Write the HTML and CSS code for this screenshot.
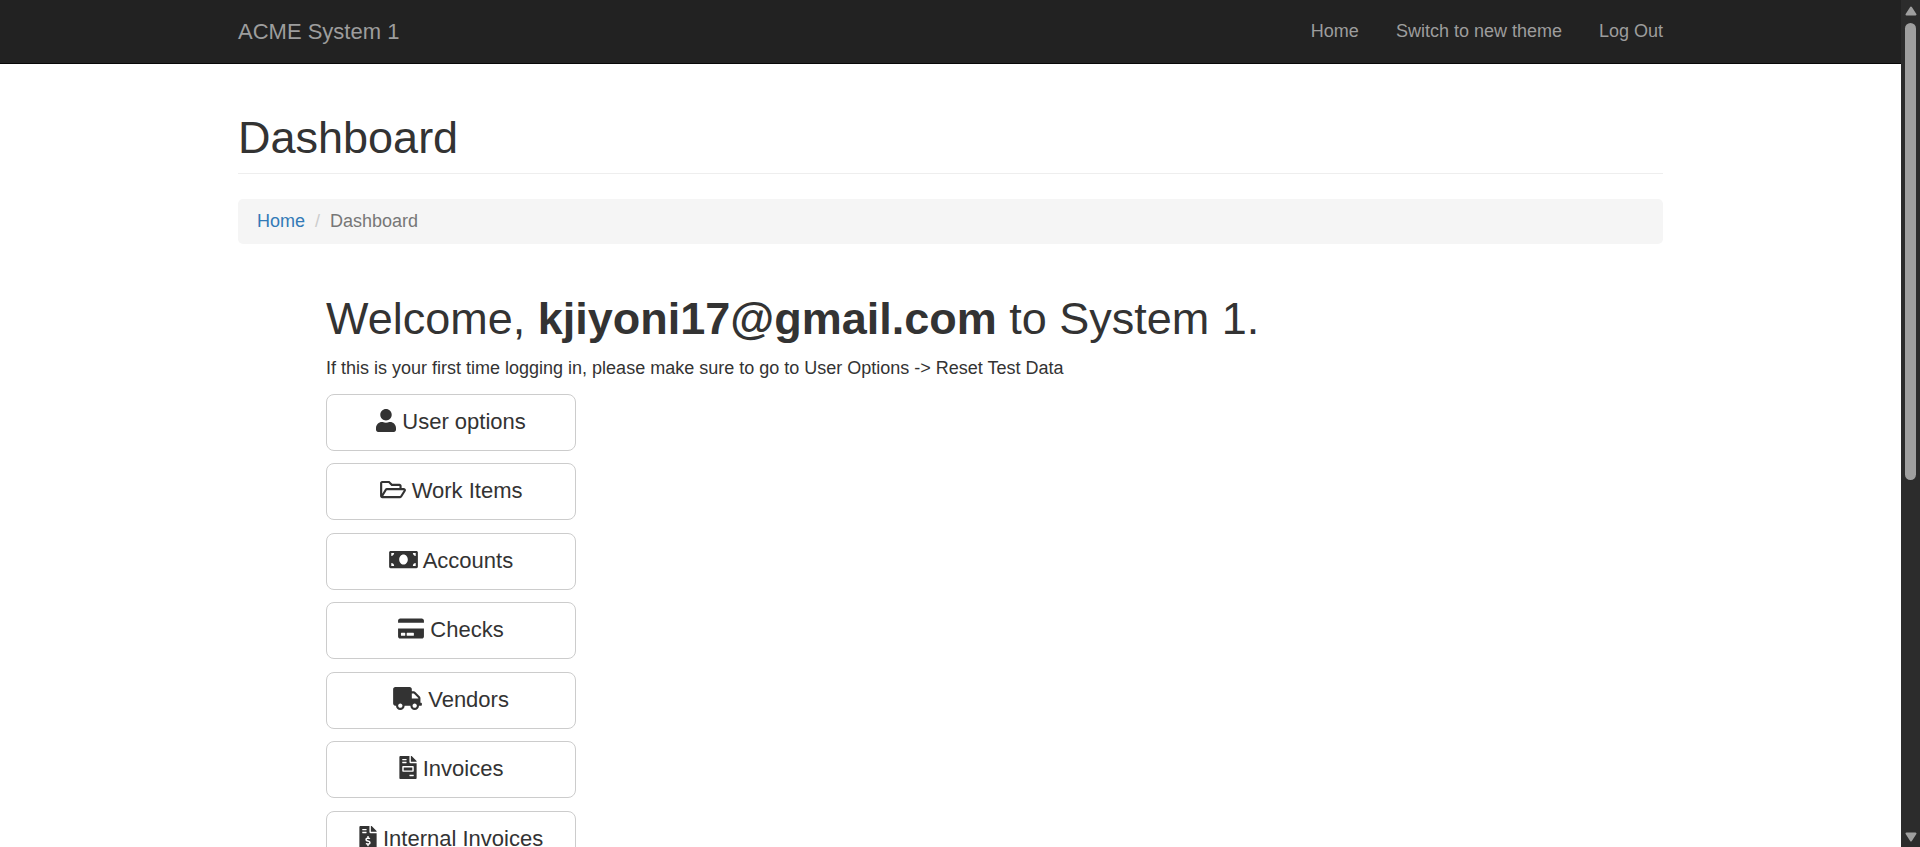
FILE: index.html
```html
<!DOCTYPE html>
<html lang="en">
<head>
<meta charset="utf-8">
<title>ACME System 1 - Dashboard</title>
<link rel="stylesheet" href="styles.css">
</head>
<body>
<div class="page">
  <header class="navbar">
    <div class="container navbar-inner">
      <a class="brand" href="#">ACME System 1</a>
      <nav class="nav">
        <a href="#">Home</a>
        <a href="#">Switch to new theme</a>
        <a href="#">Log Out</a>
      </nav>
    </div>
  </header>
  <main class="container">
    <h1 class="page-header">Dashboard</h1>
    <ol class="breadcrumb">
      <li><a href="#">Home</a></li>
      <li class="active">Dashboard</li>
    </ol>
    <section class="content">
      <h1 class="welcome">Welcome, <b>kjiyoni17@gmail.com</b> to System 1.</h1>
      <p class="hint">If this is your first time logging in, please make sure to go to User Options -&gt; Reset Test Data</p>
      <div class="menu">
        <button class="btn" type="button"><svg class="icon" style="width:20px" viewBox="0 0 448 512" aria-hidden="true"><path d="M224 256c70.7 0 128-57.3 128-128S294.7 0 224 0 96 57.3 96 128s57.3 128 128 128zm89.6 32h-16.7c-22.2 10.2-46.9 16-72.9 16s-50.6-5.8-72.9-16h-16.7C60.2 288 0 348.2 0 422.4V464c0 26.5 21.5 48 48 48h352c26.5 0 48-21.5 48-48v-41.6c0-74.2-60.2-134.4-134.4-134.4z"/></svg> User options</button>
        <button class="btn" type="button"><svg class="icon" style="width:26px" viewBox="0 0 576 512" aria-hidden="true"><path d="M527.9 224H480v-48c0-26.5-21.5-48-48-48H272l-64-64H48C21.5 64 0 85.5 0 112v288c0 26.5 21.5 48 48 48h400c16.5 0 31.9-8.5 40.7-22.6l79.9-128c20-31.9-3-73.4-40.7-73.4zM48 118c0-3.3 2.7-6 6-6h134.1l64 64H426c3.3 0 6 2.7 6 6v42H152c-16.8 0-32.4 8.8-41.1 23.2L48 351.4zm400 282H72l77.2-128H528z"/></svg> Work Items</button>
        <button class="btn" type="button"><svg class="icon" style="width:29px" viewBox="0 0 640 512" aria-hidden="true"><path d="M608 64H32C14.33 64 0 78.33 0 96v320c0 17.67 14.33 32 32 32h576c17.67 0 32-14.33 32-32V96c0-17.67-14.33-32-32-32zM48 400v-64c35.35 0 64 28.65 64 64H48zm0-224v-64h64c0 35.35-28.65 64-64 64zm272 192c-53.02 0-96-50.15-96-112 0-61.86 42.98-112 96-112s96 50.13 96 112c0 61.87-43 112-96 112zm272 32h-64c0-35.35 28.65-64 64-64v64zm0-224c-35.35 0-64-28.65-64-64h64v64z"/></svg> Accounts</button>
        <button class="btn" type="button"><svg class="icon" style="width:26px" viewBox="0 0 576 512" aria-hidden="true"><path d="M0 432c0 26.5 21.5 48 48 48h480c26.5 0 48-21.5 48-48V256H0v176zm192-68c0-6.6 5.4-12 12-12h136c6.6 0 12 5.4 12 12v40c0 6.6-5.4 12-12 12H204c-6.6 0-12-5.4-12-12v-40zm-128 0c0-6.6 5.4-12 12-12h72c6.6 0 12 5.4 12 12v40c0 6.6-5.4 12-12 12H76c-6.6 0-12-5.4-12-12v-40zM576 80v48H0V80c0-26.5 21.5-48 48-48h480c26.5 0 48 21.5 48 48z"/></svg> Checks</button>
        <button class="btn" type="button"><svg class="icon" style="width:29px" viewBox="0 0 640 512" aria-hidden="true"><path d="M624 352h-16V243.9c0-12.7-5.1-24.9-14.1-33.9L494 110.1c-9-9-21.2-14.1-33.9-14.1H416V48c0-26.5-21.5-48-48-48H48C21.5 0 0 21.5 0 48v320c0 26.5 21.5 48 48 48h16c0 53 43 96 96 96s96-43 96-96h128c0 53 43 96 96 96s96-43 96-96h48c8.8 0 16-7.2 16-16v-32c0-8.8-7.2-16-16-16zM160 464c-26.5 0-48-21.5-48-48s21.5-48 48-48 48 21.5 48 48-21.5 48-48 48zm320 0c-26.5 0-48-21.5-48-48s21.5-48 48-48 48 21.5 48 48-21.5 48-48 48zm80-208H416V144h44.1l99.9 99.9V256z"/></svg> Vendors</button>
        <button class="btn" type="button"><svg class="icon" style="width:18px" viewBox="0 0 384 512" aria-hidden="true"><path d="M288 256H96v64h192v-64zm89-151L279.1 7c-4.5-4.5-10.6-7-17-7H256v128h128v-6.1c0-6.3-2.5-12.4-7-16.9zm-153 31V0H24C10.7 0 0 10.7 0 24v464c0 13.3 10.7 24 24 24h336c13.3 0 24-10.7 24-24V160H248c-13.2 0-24-10.8-24-24zM64 72c0-4.42 3.58-8 8-8h80c4.42 0 8 3.58 8 8v16c0 4.42-3.58 8-8 8H72c-4.42 0-8-3.58-8-8V72zm0 64c0-4.42 3.58-8 8-8h80c4.42 0 8 3.58 8 8v16c0 4.42-3.58 8-8 8H72c-4.42 0-8-3.58-8-8v-16zm256 304c0 4.42-3.58 8-8 8h-80c-4.42 0-8-3.58-8-8v-16c0-4.42 3.58-8 8-8h80c4.42 0 8 3.58 8 8v16zm0-200v96c0 8.84-7.16 16-16 16H80c-8.84 0-16-7.16-16-16v-96c0-8.84 7.16-16 16-16h224c8.84 0 16 7.16 16 16z"/></svg> Invoices</button>
        <button class="btn" type="button"><svg class="icon" style="width:18px" viewBox="0 0 384 512" aria-hidden="true"><path d="M377 105L279.1 7c-4.5-4.5-10.6-7-17-7H256v128h128v-6.1c0-6.3-2.5-12.4-7-16.9zm-153 31V0H24C10.7 0 0 10.7 0 24v464c0 13.3 10.7 24 24 24h336c13.3 0 24-10.7 24-24V160H248c-13.2 0-24-10.8-24-24zM64 72c0-4.42 3.58-8 8-8h80c4.42 0 8 3.58 8 8v16c0 4.42-3.58 8-8 8H72c-4.42 0-8-3.58-8-8V72zm0 80v-16c0-4.42 3.58-8 8-8h80c4.42 0 8 3.58 8 8v16c0 4.42-3.58 8-8 8H72c-4.42 0-8-3.58-8-8zm144 263.88V440c0 4.42-3.58 8-8 8h-16c-4.42 0-8-3.58-8-8v-24.29c-11.29-.58-22.27-4.52-31.37-11.35-3.9-2.93-4.1-8.77-.57-12.14l11.75-11.21c2.77-2.64 6.89-2.76 10.13-.73 3.87 2.42 8.26 3.72 12.82 3.72h28.11c6.5 0 11.8-5.92 11.8-13.19 0-5.95-3.61-11.19-8.77-12.73l-45-13.5c-18.59-5.58-31.58-23.42-31.58-43.39 0-24.52 19.05-44.44 42.67-45.07V232c0-4.42 3.58-8 8-8h16c4.42 0 8 3.58 8 8v24.29c11.29.58 22.27 4.51 31.37 11.35 3.9 2.93 4.1 8.77.57 12.14l-11.75 11.21c-2.77 2.64-6.89 2.76-10.13.73-3.87-2.43-8.26-3.72-12.82-3.72h-28.11c-6.5 0-11.8 5.92-11.8 13.19 0 5.95 3.61 11.19 8.77 12.73l45 13.5c18.59 5.58 31.58 23.42 31.58 43.39 0 24.53-19.05 44.44-42.67 45.07z"/></svg> Internal Invoices</button>
      </div>
    </section>
  </main>
</div>
<div class="scrollbar" aria-hidden="true">
  <svg class="arrow" viewBox="0 0 12 10"><path d="M6 1.5L10.5 8.5H1.5z"/></svg>
  <div class="track"><div class="thumb"></div></div>
  <svg class="arrow" viewBox="0 0 12 10"><path d="M6 8.5L10.5 1.5H1.5z"/></svg>
</div>
</body>
</html>
```
FILE: styles.css
```css
* { box-sizing: border-box; }

body {
  margin: 0;
  height: 100vh;
  display: flex;
  overflow: hidden;
  background: #fff;
  color: #333;
  font-family: "Liberation Sans", Arial, sans-serif;
  font-size: 18px;
  line-height: 25px;
}

a { color: #337ab7; text-decoration: none; }

.page {
  flex: 1;
  min-width: 0;
  overflow-y: auto;
  scrollbar-width: none;
}

.container {
  max-width: 1463px;
  margin: 0 auto;
  padding: 0 19px;
}

.navbar {
  background: #222;
  border-bottom: 1px solid #080808;
  margin-bottom: 49px;
}

.navbar-inner {
  display: flex;
  justify-content: space-between;
  align-items: center;
  min-height: 63px;
}

.navbar a { color: #9d9d9d; }
.brand { font-size: 22px; }
.nav { display: flex; gap: 37px; }

.page-header {
  margin: 0 0 25px;
  padding-bottom: 11px;
  border-bottom: 1px solid #eee;
  font-size: 45px;
  font-weight: 400;
  line-height: 49px;
}

.breadcrumb {
  display: flex;
  margin: 0 0 50px;
  padding: 10px 19px;
  border-radius: 5px;
  background: #f5f5f5;
  list-style: none;
}

.breadcrumb .active { color: #777; }
.breadcrumb .active::before {
  content: "/";
  padding: 0 10px;
  color: #ccc;
}

.content { padding: 0 88px; }

.welcome {
  margin: 0 0 12px;
  font-size: 45px;
  font-weight: 400;
  line-height: 50px;
}

.hint { margin: 0 0 13px; }

.menu {
  display: flex;
  flex-direction: column;
  width: 250px;
}

.btn {
  margin: 0 0 12px;
  padding: 12px 19px 13px;
  border: 1px solid #ccc;
  border-radius: 8px;
  background: #fff;
  color: #333;
  font: 22px/30px "Liberation Sans", Arial, sans-serif;
  white-space: nowrap;
  text-align: center;
}

.btn:nth-child(even) { margin-bottom: 13px; }

.icon {
  height: 23px;
  vertical-align: -3px;
  fill: currentColor;
}

.scrollbar {
  display: flex;
  flex-direction: column;
  align-items: center;
  width: 19px;
  padding: 6px 0 5px;
  background: #2c2c2c;
}

.arrow {
  width: 12px;
  height: 10px;
  fill: #9f9f9f;
  stroke: #9f9f9f;
  stroke-width: 2;
  stroke-linejoin: round;
}

.track {
  flex: 1;
  align-self: stretch;
  padding: 7px 4px;
}

.thumb {
  height: 57%;
  border-radius: 6px;
  background: #9f9f9f;
}
```
